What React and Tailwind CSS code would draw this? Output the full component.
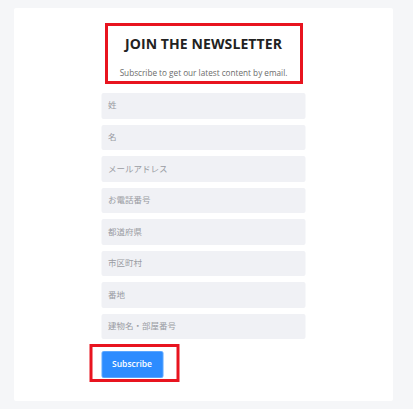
export default function App() {
  const fields = ["姓", "名", "メールアドレス", "お電話番号", "都道府県", "市区町村", "番地", "建物名・部屋番号"];
  const font = { fontFamily: '"Open Sans", "Noto Sans CJK JP", sans-serif' };
  return (
    <div className="w-[413px] h-[409px] bg-[#f5f6f8] pt-[8px] pl-[14px]" style={font}>
      <div className="w-[379px] h-[393px] bg-white rounded-[2px] flex flex-col items-center">
        <div className="mt-[15px] w-[198px] h-[61px] border-[3px] border-[#e8141f] flex flex-col items-center">
          <div className="mt-[8px] text-[14px] leading-[20px] font-bold text-[#222] tracking-[0.1px]">JOIN THE NEWSLETTER</div>
          <div className="mt-[13px] text-[8.2px] leading-[12px] text-[#6b6b6b]">Subscribe to get our latest content by email.</div>
        </div>
        <div className="mt-[9px] w-[204px] flex flex-col gap-[5.83px] -translate-x-[0.5px]">
          {fields.map((f) => (
            <div key={f} className="h-[25.7px] bg-[#f0f1f5] rounded-[2px] flex items-center pl-[7px] text-[8.5px] text-[#9a9ca3]">
              {f}
            </div>
          ))}
          <div className="-mt-[1.5px] -ml-[12px] w-[90px] h-[38px] border-[3px] border-[#e8141f] pl-[9px] pt-[4px]">
            <div className="w-[62px] h-[27px] bg-[#2d8cff] border border-[#5aa6ff] rounded-[2px] flex items-center justify-center text-white text-[8.5px] font-semibold">
              Subscribe
            </div>
          </div>
        </div>
      </div>
    </div>
  );
}
